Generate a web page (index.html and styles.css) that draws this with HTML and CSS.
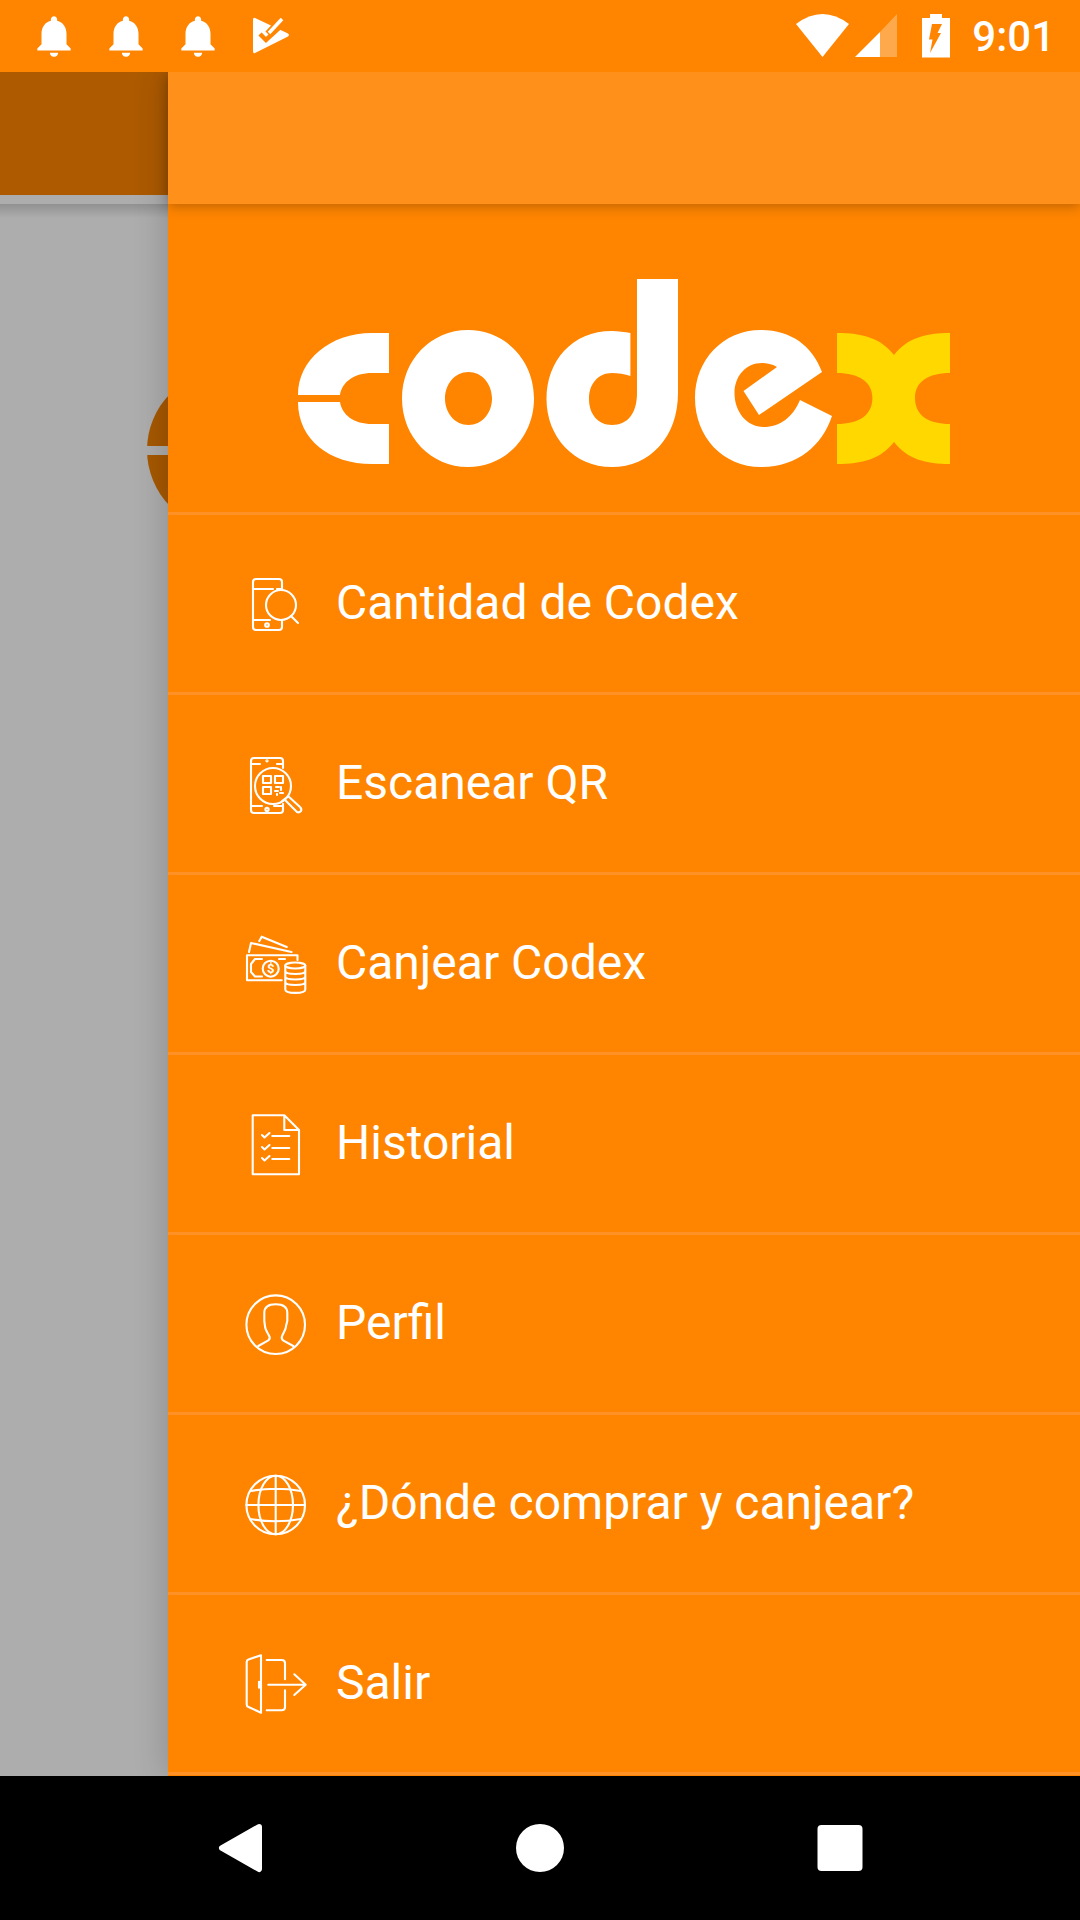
FILE: index.html
```html
<!DOCTYPE html>
<html>

<head>
    <title>Codex</title>
    <link rel="stylesheet" href="styles.css">
</head>

<body>
    <div class="screen">
        <div class="statusbar">
            <svg class="bell" viewBox="0 0 24 24"><path d="M12 22c1.1 0 2-.9 2-2h-4c0 1.100.9 2 2 2zm6-6v-5c0-3.070-1.630-5.640-4.500-6.320V4c0-.830-.670-1.500-1.500-1.500s-1.500.670-1.500 1.500v.680C7.640 5.360 6 7.920 6 11v5l-2 2v1h16v-1l-2-2z"/></svg>
            <svg class="bell" viewBox="0 0 24 24"><path d="M12 22c1.1 0 2-.9 2-2h-4c0 1.100.9 2 2 2zm6-6v-5c0-3.070-1.630-5.640-4.500-6.320V4c0-.830-.670-1.500-1.500-1.500s-1.500.670-1.500 1.500v.680C7.640 5.360 6 7.920 6 11v5l-2 2v1h16v-1l-2-2z"/></svg>
            <svg class="bell" viewBox="0 0 24 24"><path d="M12 22c1.1 0 2-.9 2-2h-4c0 1.100.9 2 2 2zm6-6v-5c0-3.070-1.630-5.640-4.500-6.320V4c0-.830-.670-1.500-1.500-1.500s-1.500.670-1.500 1.500v.680C7.640 5.360 6 7.920 6 11v5l-2 2v1h16v-1l-2-2z"/></svg>
            <svg class="bell" viewBox="245 11 50 50">
                <path d="M255 18 L287 33 Q291 35 287 37 L255 53 Q253 54 253 51 V20 Q253 17 255 18Z" fill="#fff"/>
                <path d="M268 34 L282 19" class="check-halo"/>
                <path d="M260 34 L266 40 L280 27" class="check-cut"/>
                <path d="M269 33 L282 19" class="check-line"/>
            </svg>

            <svg class="wifi" viewBox="797 14 53 44"><path d="M823.500 57 L797 24 Q823.500 4 850 24Z"/></svg>
            <svg class="signal" viewBox="856 14 42 44">
                <path d="M856 57 L881 32 V57Z"/>
                <path d="M881 32 L898 14 V57 H881Z" opacity="0.3"/>
            </svg>
            <svg class="battery" viewBox="923 14 28 44">
                <path d="M931 14 H943 V18 H951 V57.500 H923 V18 H931Z"/>
                <path d="M933 24 H943 L938.500 33 H942 L931 53 L933.500 39.500 H930Z" fill="#ff8500"/>
            </svg>
            <span class="clock">9:01</span>
        </div>

        <div class="main">
            <div class="page-bar"></div>
            <div class="page-shadow"></div>
            <div class="page-logo"><div class="page-logo-gap"></div></div>

            <div class="drawer">
                <div class="drawer-head"></div>
                <div class="drawer-logo">
                    <svg class="logo" viewBox="290 248 668 220">
                        <g fill="#fff">
                            <path d="M389 333 H372 C330 333 298 360 298 395 H340 C342 382 354 373 372 373 H389Z"/>
                            <path d="M298 402 H340 C342 415 354 424 372 424 H389 V464 H372 C330 464 298 440 298 402Z"/>
                            <path fill-rule="evenodd" d="M468 330 C505 330 534 360 534 398.500 C534 437 505 467 468 467 C431 467 402 437 402 398.500 C402 360 431 330 468 330Z M468.500 372 C455 372 445 384 445 398.500 C445 413 455 425 468.500 425 C482 425 492 413 492 398.500 C492 384 482 372 468.500 372Z"/>
                            <path d="M678 279 V393 C678 437 650 467 612 467 C574 467 546.500 437 546.500 399 C546.500 361 572 331 612 331 C618 331 625 332 630.400 333 V376 C625 374 618 373 612 373 C598 373 589 384 589 399 C589 414 598 425 612 425 C628 425 637 413 637 393 V279Z"/>
                            <path d="M822 372 L759 415 L743.500 391 L777 367 C772 364 767 363 762 363 C746 363 734.500 376 734.500 393 C734.500 412 747 427 763.500 427 C780 427 793 417 800 400 L832 416 C822 446 797 467 761 467 C723 467 695 437 695 398 C695 360 723 330 761 330 C790 330 812 345 822 372Z"/>
                        </g>
                        <path fill="#ffd800" d="M837 333 C862 333 881 338 894 355 C907 338 926 333 950 333 V373 C928 373 915 382 915 398 C915 415 928 424 950 424 V464 C926 464 907 459 894 442 C881 459 862 464 837 464 V424 C859 424 872.400 415 872.400 398 C872.400 382 859 373 837 373Z"/>
                    </svg>
                </div>

                <div class="menu">
                    <div class="menu-item">
                        <svg class="menu-icon" viewBox="0 0 64 64">
                            <path d="M24 56 H12 Q9 56 9 53 V8 Q9 5 12 5 H35 Q38 5 38 8 V16 M38 46 V53 Q38 56 35 56 H24 M9 15 H29 M33 15 H38 M9 46 H26"/>
                            <circle cx="23" cy="51" r="1.800"/>
                            <circle cx="37" cy="31" r="15"/>
                            <path d="M47 42 L54 49"/>
                        </svg>
                        <span>Cantidad de Codex</span>
                    </div>
                    <div class="menu-item">
                        <svg class="menu-icon" viewBox="0 0 64 64">
                            <path d="M13 52 H7 V7 Q7 4 10 4 H36 Q39 4 39 7 V14 M7 52 V56 Q7 59 10 59 H36 Q39 59 39 56 V50 M7 10 H16 M33 10 H39 M7 52 H18 M30 52 H39"/>
                            <circle cx="23" cy="6.800" r="0.600"/>
                            <circle cx="23" cy="55.500" r="1.600"/>
                            <circle cx="29" cy="32" r="18"/>
                            <path d="M42 44 L38 47 M41 46 L53 58 Q55 59 57 57 Q58 55 56 53 L44 42"/>
                            <rect x="19" y="22" width="8" height="7"/>
                            <rect x="31" y="22" width="8" height="7"/>
                            <rect x="19" y="33" width="8" height="7"/>
                            <path d="M32 33 H35 M37 33 V36 M31 37 H34 M36 39 H39 M33 41 V40"/>
                        </svg>
                        <span>Escanear QR</span>
                    </div>
                    <div class="menu-item">
                        <svg class="menu-icon" viewBox="0 0 64 64">
                            <path d="M5 18 L7 9 L47.500 18 M15.300 7 L17.700 2.700 L42.700 13"/>
                            <path d="M37.700 46.300 H3 V21.300 H53.500 V26"/>
                            <path d="M18 25 H11 L7 30 V38 L11 42.500 H18 M35 25 H41"/>
                            <circle cx="26.700" cy="34.700" r="8"/>
                            <text x="26.700" y="39" class="dollar">$</text>
                            <ellipse cx="51.300" cy="31.500" rx="10" ry="3"/>
                            <path d="M41.300 31.500 V55.500 C41.300 60 61.300 60 61.300 55.500 V31.500 M41.300 37 C41.300 41 61.300 41 61.300 37 M41.300 42.500 C41.300 46.500 61.300 46.500 61.300 42.500 M41.300 48 C41.300 52 61.300 52 61.300 48"/>
                        </svg>
                        <span>Canjear Codex</span>
                    </div>
                    <div class="menu-item">
                        <svg class="menu-icon" viewBox="0 0 64 64">
                            <path d="M8.700 1.300 H40.300 L55 16 V60.300 H8.700Z M40.300 1.300 V16 H55"/>
                            <path d="M18 21 L20.500 23.500 L25.500 19 M28.300 22 H45.300 M18 33 L20.500 35.500 L25.500 31 M28.300 34 H45.300 M18 44 L20.500 46.500 L25.500 42 M28.300 45 H45.300"/>
                        </svg>
                        <span>Historial</span>
                    </div>
                    <div class="menu-item">
                        <svg class="menu-icon" viewBox="0 0 64 64">
                            <circle cx="31.700" cy="30.700" r="29.300"/>
                            <path d="M14.300 52 L24.300 46.300 C26 45 26 43 25 41.500 C23 38 21 35 21 32 L20.300 27 V19 C20.300 13 25 10.300 31.700 10.300 C38.400 10.300 43.300 13 43.300 19 V27 L42 32 C42 35 40 38 38.300 41.500 C37.500 43 37.700 45 39 46.300 L49.300 52"/>
                        </svg>
                        <span>Perfil</span>
                    </div>
                    <div class="menu-item">
                        <svg class="menu-icon" viewBox="0 0 64 64">
                            <circle cx="31.700" cy="31" r="29.300"/>
                            <ellipse cx="31.700" cy="31" rx="17.300" ry="29.300"/>
                            <path d="M31.700 1.700 V60.300 M2.400 31 H61 M6.500 17 Q31.700 12.500 57 17 M6.500 45 Q31.700 49.500 57 45"/>
                        </svg>
                        <span>¿Dónde comprar y canjear?</span>
                    </div>
                    <div class="menu-item">
                        <svg class="menu-icon" viewBox="0 0 64 64">
                            <path d="M17 1.300 L4.500 5.500 Q2.700 6.200 2.700 8 V50.500 Q2.700 52.300 4.500 53 L17 58.700Z"/>
                            <path d="M15 27.700 V33.700"/>
                            <path d="M22.700 6 H37.700 Q41 6 41 9.300 V25.300 M41 36.300 V53 Q41 56.300 37.700 56.300 H22.700"/>
                            <path d="M24.300 30.700 H61.700 M50.300 20.300 L61.700 30.700 L50.300 41"/>
                        </svg>
                        <span>Salir</span>
                    </div>
                </div>
            </div>
        </div>

        <div class="navbar">
            <svg class="nav-btn" viewBox="0 0 60 60"><path class="nav-back" d="M49 9 L12 30 L49 51Z"/></svg>
            <svg class="nav-btn" viewBox="0 0 60 60"><circle cx="30" cy="30" r="24"/></svg>
            <svg class="nav-btn" viewBox="0 0 60 60"><rect x="7.500" y="7" width="45" height="46" rx="4"/></svg>
        </div>
    </div>
</body>

</html>
```

FILE: styles.css
```css
body {
    font-family: Roboto, "Noto Sans", sans-serif;
    margin: 0;
    padding: 0;
    background-color: #000;
}

.screen {
    width: 1080px;
    height: 1920px;
    display: flex;
    flex-direction: column;
    overflow: hidden;
}

/* status bar */
.statusbar {
    height: 72px;
    flex: none;
    display: flex;
    align-items: center;
    padding: 0 25px 0 29px;
    background-color: #ff8500;
    color: #fff;
}

.statusbar svg {
    fill: #fff;
    flex: none;
}

.bell {
    width: 50px;
    height: 50px;
    margin-right: 22px;
}

.check-halo {
    fill: none;
    stroke: #ff8500;
    stroke-width: 7;
}

.check-cut {
    fill: none;
    stroke: #ff8500;
    stroke-width: 4.500;
}

.check-line {
    fill: none;
    stroke: #fff;
    stroke-width: 3.500;
}

.wifi {
    width: 53px;
    height: 44px;
    margin-left: auto;
}

.signal {
    width: 42px;
    height: 44px;
    margin-left: 6px;
}

.battery {
    width: 28px;
    height: 44px;
    margin-left: 25px;
}

.clock {
    font-size: 42px;
    font-weight: 500;
    margin-left: 22px;
}

/* page behind the drawer */
.main {
    flex: 1;
    position: relative;
    overflow: hidden;
    background-color: #adadad;
}

.page-bar {
    height: 123px;
    background-color: #ad5a00;
}

.page-shadow {
    height: 14px;
    margin-top: 9px;
    background: linear-gradient(rgba(0, 0, 0, 0.16), rgba(0, 0, 0, 0));
}

.page-logo {
    position: absolute;
    left: 147px;
    top: 298px;
    width: 160px;
    height: 160px;
    border-radius: 50%;
    background-color: #a65800;
}

.page-logo-gap {
    height: 9px;
    margin-top: 76px;
    background-color: #adadad;
}

/* drawer */
.drawer {
    position: absolute;
    left: 168px;
    top: 0;
    right: 0;
    bottom: 0;
    display: flex;
    flex-direction: column;
    background-color: #ff8500;
    box-shadow: -4px 0 30px rgba(0, 0, 0, 0.16);
}

.drawer-head {
    height: 132px;
    flex: none;
    background-color: #ff911a;
    box-shadow: 0 2px 12px rgba(0, 0, 0, 0.28);
}

.drawer-logo {
    height: 308px;
    flex: none;
    display: flex;
    align-items: center;
    justify-content: center;
}

.logo {
    width: 668px;
    height: 220px;
}

.menu {
    border-bottom: 3px solid #ff9126;
}

.menu-item {
    height: 180px;
    box-sizing: border-box;
    border-top: 3px solid #ff9126;
    padding-left: 76px;
    display: flex;
    align-items: center;
    gap: 28px;
    color: #fff;
    font-size: 48px;
}

.menu-item span {
    margin-bottom: 2px;
}

.menu-icon {
    width: 64px;
    height: 64px;
    margin-top: 4px;
    flex: none;
    fill: none;
    stroke: #fff;
    stroke-width: 2.100;
    stroke-linejoin: round;
    stroke-linecap: round;
}

.dollar {
    fill: #fff;
    stroke: none;
    font-family: Roboto, sans-serif;
    font-size: 13px;
    font-weight: 700;
    text-anchor: middle;
}

/* navigation bar */
.navbar {
    height: 144px;
    flex: none;
    display: flex;
    align-items: center;
    justify-content: center;
    gap: 240px;
    background-color: #000;
}

.nav-btn {
    width: 60px;
    height: 60px;
    fill: #fff;
}

.nav-back {
    stroke: #fff;
    stroke-width: 6;
    stroke-linejoin: round;
}
```
